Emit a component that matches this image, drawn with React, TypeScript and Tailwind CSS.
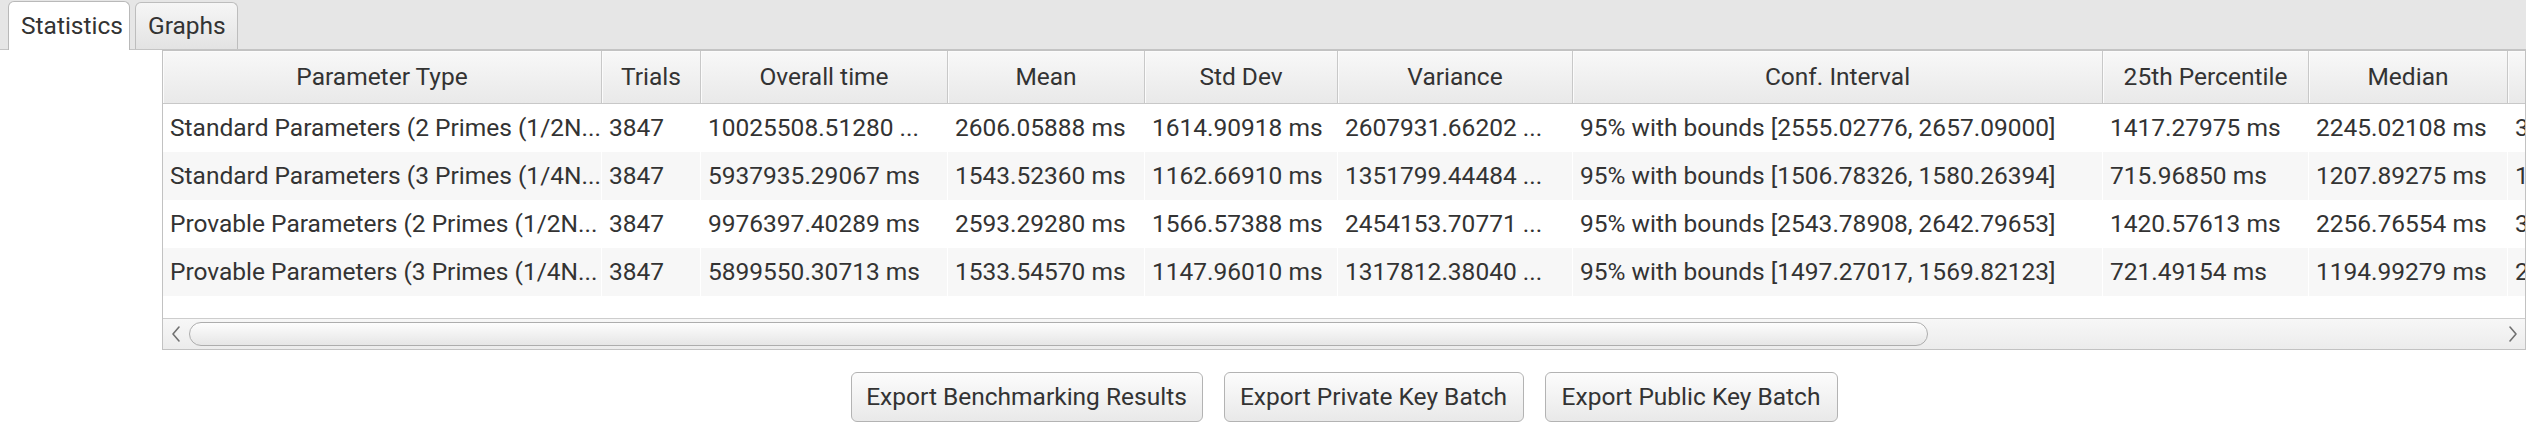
import React from 'react';

const columns = [
    { title: 'Parameter Type', width: 'w-[439px]' },
    { title: 'Trials', width: 'w-[99px]' },
    { title: 'Overall time', width: 'w-[247px]' },
    { title: 'Mean', width: 'w-[197px]' },
    { title: 'Std Dev', width: 'w-[193px]' },
    { title: 'Variance', width: 'w-[235px]' },
    { title: 'Conf. Interval', width: 'w-[530px]' },
    { title: '25th Percentile', width: 'w-[206px]' },
    { title: 'Median', width: 'w-[199px]' },
    { title: '75th Percentile', width: 'w-[206px]' },
];

const rows = [
    ['Standard Parameters (2 Primes (1/2N...', '3847', '10025508.51280 ...', '2606.05888 ms', '1614.90918 ms', '2607931.66202 ...', '95% with bounds [2555.02776, 2657.09000]', '1417.27975 ms', '2245.02108 ms', '3412.87710 ms'],
    ['Standard Parameters (3 Primes (1/4N...', '3847', '5937935.29067 ms', '1543.52360 ms', '1162.66910 ms', '1351799.44484 ...', '95% with bounds [1506.78326, 1580.26394]', '715.96850 ms', '1207.89275 ms', '1988.40162 ms'],
    ['Provable Parameters (2 Primes (1/2N...', '3847', '9976397.40289 ms', '2593.29280 ms', '1566.57388 ms', '2454153.70771 ...', '95% with bounds [2543.78908, 2642.79653]', '1420.57613 ms', '2256.76554 ms', '3398.11467 ms'],
    ['Provable Parameters (3 Primes (1/4N...', '3847', '5899550.30713 ms', '1533.54570 ms', '1147.96010 ms', '1317812.38040 ...', '95% with bounds [1497.27017, 1569.82123]', '721.49154 ms', '1194.99279 ms', '2003.55821 ms'],
];

const buttons = [
    { label: 'Export Benchmarking Results', width: 'w-[352px]' },
    { label: 'Export Private Key Batch', width: 'w-[300px]' },
    { label: 'Export Public Key Batch', width: 'w-[293px]' },
];

const Chevron = ({ dir }: { dir: 'left' | 'right' }) => (
    <svg width="12" height="18" viewBox="0 0 12 18" fill="none">
        <polyline
            points={dir === 'left' ? '9,2 3,9 9,16' : '3,2 9,9 3,16'}
            stroke="#707070"
            strokeWidth="1.6"
            strokeLinecap="round"
            strokeLinejoin="round"
        />
    </svg>
);

const App = () => {
    return (
        <div className="w-[2526px] h-[426px] overflow-hidden bg-white text-[#333333] text-[24.5px] font-['Roboto',sans-serif]">
            {/* Tab strip */}
            <div className="h-[50px] bg-[#e6e6e6] border-b border-[#c4c4c4] flex items-end pl-[8px] gap-[5px]">
                <div className="w-[122px] h-[49px] -mb-px bg-white border border-b-0 border-[#b9b9b9] rounded-t-[6px] pl-[12px] flex items-center">
                    Statistics
                </div>
                <div className="w-[103px] h-[47px] bg-gradient-to-b from-[#f6f6f6] to-[#e3e3e3] border border-b-0 border-[#bdbdbd] rounded-t-[6px] pl-[12px] flex items-center">
                    Graphs
                </div>
            </div>

            <div className="ml-[162px]">
                {/* Table */}
                <div className="h-[300px] border border-[#c2c2c2] overflow-hidden flex flex-col">
                    <div className="flex h-[53px] border-b border-[#c8c8c8] bg-gradient-to-b from-[#f8f8f8] to-[#e9e9e9] shrink-0">
                        {columns.map(c => (
                            <div key={c.title} className={`${c.width} shrink-0 border-r border-[#c8c8c8] shadow-[inset_1px_1px_0_#fbfbfb] flex items-center justify-center whitespace-nowrap overflow-hidden`}>
                                {c.title}
                            </div>
                        ))}
                    </div>
                    {rows.map((r, i) => (
                        <div key={i} className={`flex h-[48px] shrink-0 ${i % 2 === 1 ? 'bg-[#f7f7f7]' : 'bg-white'}`}>
                            {r.map((v, j) => (
                                <div key={j} className={`${columns[j].width} shrink-0 border-r border-white pl-[7px] flex items-center whitespace-nowrap overflow-hidden`}>
                                    {v}
                                </div>
                            ))}
                        </div>
                    ))}
                    <div className="flex-1" />
                    {/* Horizontal scrollbar */}
                    <div className="h-[31px] shrink-0 border-t border-[#cdcdcd] bg-gradient-to-b from-[#f7f7f7] to-[#ececec] flex items-center">
                        <div className="w-[25px] h-full flex items-center justify-center">
                            <Chevron dir="left" />
                        </div>
                        <div className="flex-1 h-full flex items-center">
                            <div className="w-[1739px] h-[24px] ml-px rounded-full border border-[#adadad] bg-gradient-to-b from-[#fdfdfd] to-[#e6e6e6]" />
                        </div>
                        <div className="w-[25px] h-full flex items-center justify-center">
                            <Chevron dir="right" />
                        </div>
                    </div>
                </div>

                {/* Buttons */}
                <div className="flex justify-center gap-[21px] mt-[22px]">
                    {buttons.map(b => (
                        <button key={b.label} className={`${b.width} h-[50px] rounded-[6px] border border-[#b3b3b3] bg-gradient-to-b from-[#fcfcfc] to-[#e9e9e9] text-[#333333] whitespace-nowrap`}>
                            {b.label}
                        </button>
                    ))}
                </div>
            </div>
        </div>
    );
};

export default App;
